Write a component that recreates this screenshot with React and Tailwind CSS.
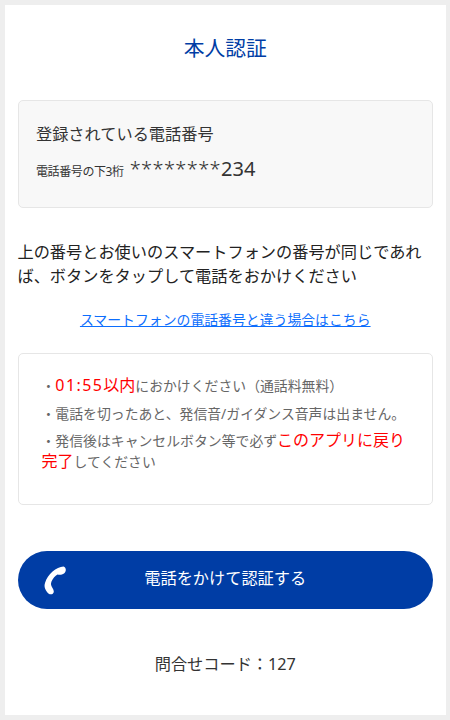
const font = { fontFamily: '"Noto Sans", "Noto Sans CJK JP", sans-serif' };

function PhoneIcon() {
  return (
    <svg width="24" height="30" viewBox="0 0 24 30" className="absolute left-[26px] top-[14px]">
      <path
        d="M19.5 1.5 C12.5 2 3.5 9 1 18 C0 21 0.7 23 2 25.5 C4 29 6.5 30 8.5 29 C10.5 27.5 10 25.5 8.5 23 C7 20.5 6.5 19 7.5 16.5 C9 13 11 11 13.5 9.5 C15.5 10 18 10 20 8.5 C22.5 6.5 22.5 2.5 19.5 1.5 Z"
        fill="#fff"
      />
    </svg>
  );
}

export default function App() {
  return (
    <div className="bg-[#eeeeee] w-[450px] h-[720px] p-[5px] pr-[4px]" style={font}>
      <div className="bg-white h-[710px] pl-[12.5px] pr-[13px] text-[#333333] flex flex-col">
        <h1 className="text-[20.8px] leading-[30px] text-center text-[#003da5] mt-[28px] font-normal">本人認証</h1>

        <section className="mt-[37px] h-[108px] rounded-[5px] border border-[#e6e6e6] bg-[#f8f8f8] pl-[17.5px] pr-[18px] pt-[21px]">
          <p className="text-[16.2px] leading-[24px]">登録されている電話番号</p>
          <p className="mt-[10px] flex items-baseline leading-[26px]">
            <span className="text-[12px] tracking-[-0.4px]">電話番号の下3桁</span>
            <span className="text-[20px] ml-[6px] text-[#333333]">
              <span className="tracking-[0.4px] font-light">********</span>234
            </span>
          </p>
        </section>

        <p className="mt-[32px] text-[16.2px] leading-[24px] text-[#222222]">
          上の番号とお使いのスマートフォンの番号が同じであれば、ボタンをタップして電話をおかけください
        </p>

        <a className="mt-[21px] block text-center text-[13.86px] leading-[22px] text-[#0d6efd] underline">
          スマートフォンの電話番号と違う場合はこちら
        </a>

        <section className="mt-[22px] h-[152px] rounded-[5px] border border-[#e6e6e6] bg-white px-[23px] pt-[19px] text-[13.86px] text-[#666666]">
          <p className="leading-[24px] whitespace-nowrap">
            ・<span className="text-[16px] text-[#ff0000]"><span className="tracking-[1.4px]">01:55</span>以内</span>におかけください（通話料無料）
          </p>
          <p className="mt-[4px] leading-[24px] whitespace-nowrap">・電話を切ったあと、発信音/ガイダンス音声は出ません。</p>
          <p className="mt-[4px] leading-[20px]">
            ・発信後はキャンセルボタン等で必ず<span className="text-[16px] text-[#ff0000]">このアプリに戻り完了</span>してください
          </p>
        </section>

        <button className="relative mt-[46px] h-[58px] rounded-full bg-[#003da5] text-white text-[16.2px] text-center pb-[3px]">
          <PhoneIcon />
          電話をかけて認証する
        </button>

        <p className="mt-[43px] text-center text-[16.2px] leading-[24px] text-[#333333]">問合せコード：127</p>
      </div>
    </div>
  );
}
